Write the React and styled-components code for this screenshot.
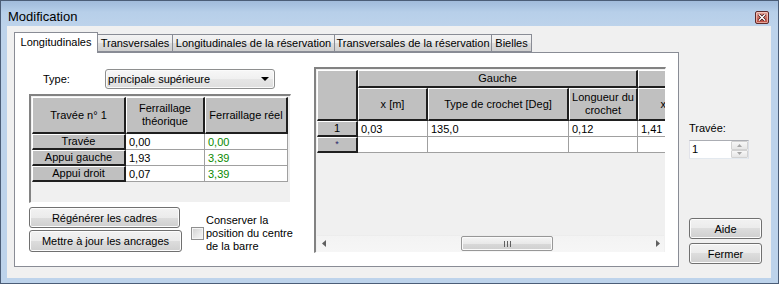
import React from "react"
import styled, { createGlobalStyle } from "styled-components"

const GlobalStyle = createGlobalStyle`
    html, body {
        margin: 0;
        padding: 0;
        background: #ffffff;
    }
    body {
        font-family: "Liberation Sans", Arial, sans-serif;
        font-size: 11px;
        color: #000;
    }
    * {
        box-sizing: border-box;
    }
`

const Window = styled.div`
    width: 779px;
    height: 284px;
    border: 1px solid #4b5d77;
    background: linear-gradient(to bottom, #a1bbdb 0px, #a9c3e1 5px, #b7cfe9 11px, #bdd3eb 26px, #bdd3eb 100%);
    display: flex;
    flex-direction: column;
    padding: 0 7px 5px 6px;
`

const TitleBar = styled.div`
    height: 25px;
    display: flex;
    align-items: flex-start;
    padding-top: 8px;
    padding-left: 1px;
`

const Title = styled.span`
    font-size: 13px;
    line-height: 15px;
`

const CloseButton = styled.div`
    margin-left: auto;
    margin-right: 2px;
    margin-top: 2px;
    width: 14px;
    height: 13px;
    border: 1px solid #5e2a2a;
    border-radius: 2px;
    background: linear-gradient(to bottom, #e3a79e 0%, #cf6f63 50%, #b9483c 100%);
    box-shadow: inset 0 0 0 1px rgba(255, 220, 210, 0.6);
    display: flex;
    align-items: center;
    justify-content: center;
`

const Client = styled.div`
    flex: 1;
    background: #f0f0f0;
    display: flex;
    padding: 6px 9px 11px 7px;
`

const TabControl = styled.div`
    width: 665px;
    display: flex;
    flex-direction: column;
`

const TabStrip = styled.div`
    height: 20px;
    display: flex;
    align-items: flex-end;
`

const Tab = styled.div`
    width: ${p => p.$width}px;
    height: ${p => (p.$active ? 21 : 18)}px;
    margin-bottom: ${p => (p.$active ? -1 : 0)}px;
    margin-left: ${p => (p.$first ? 0 : -1)}px;
    position: relative;
    z-index: ${p => (p.$active ? 2 : 1)};
    border: 1px solid #898c95;
    border-bottom: ${p => (p.$active ? "none" : "1px solid #898c95")};
    background: ${p => (p.$active
        ? "#ffffff"
        : "linear-gradient(to bottom, #f3f3f3 0%, #ebebeb 50%, #dddddd 50%, #cfcfcf 100%)")};
    display: flex;
    align-items: center;
    justify-content: center;
    white-space: nowrap;
    padding-bottom: ${p => (p.$active ? 2 : 0)}px;
`

const Panel = styled.div`
    flex: 1;
    border: 1px solid #898c95;
    background: #ffffff;
    display: flex;
    align-items: flex-start;
`

const LeftColumn = styled.div`
    margin-left: 14px;
    margin-top: 16px;
    width: 262px;
    display: flex;
    flex-direction: column;
`

const TypeRow = styled.div`
    height: 20px;
    display: flex;
    align-items: center;
`

const TypeLabel = styled.span`
    width: 76px;
    padding-left: 14px;
`

const Dropdown = styled.div`
    width: 170px;
    height: 20px;
    border: 1px solid #8e8f8f;
    border-radius: 3px;
    background: linear-gradient(to bottom, #f7f7f7 0%, #f0f0f0 50%, #e6e6e6 50%, #dedede 100%);
    box-shadow: inset 0 0 0 1px #fbfbfb;
    display: flex;
    align-items: center;
    padding: 0 5px 0 2px;
    justify-content: space-between;
`

const GridFrame = styled.div`
    width: ${p => p.$width}px;
    height: ${p => p.$height}px;
    margin-top: ${p => p.$top || 0}px;
    margin-left: ${p => p.$left || 0}px;
    border-style: solid;
    border-width: 2px 1px 1px 2px;
    border-color: #828282 #ffffff #ffffff #828282;
    padding: 1px 0 0 1px;
    background: #f0f0f0;
    overflow: hidden;
    display: flex;
    flex-direction: column;
`

const Grid = styled.div`
    display: grid;
    grid-template-columns: ${p => p.$cols};
    grid-template-rows: ${p => p.$rows};
    width: max-content;
`

const HeadCell = styled.div`
    background: #c0c0c0;
    border-style: solid;
    border-width: 1px 2px 2px 1px;
    border-color: #ffffff #1f1f1f #1f1f1f #ffffff;
    display: flex;
    align-items: center;
    justify-content: center;
    text-align: center;
    line-height: 13px;
    white-space: nowrap;
    overflow: hidden;
    grid-column: ${p => (p.$span ? `span ${p.$span}` : "auto")};
    grid-row: ${p => (p.$rowSpan ? `span ${p.$rowSpan}` : "auto")};
    font-size: ${p => (p.$small ? 9 : 11)}px;
    color: ${p => (p.$small ? "#2a2a6a" : "#000")};
`

const DataCell = styled.div`
    background: #ffffff;
    border-right: 1px solid #a0a0a0;
    border-bottom: 1px solid #a0a0a0;
    padding-left: 3px;
    display: flex;
    align-items: center;
    white-space: nowrap;
    color: ${p => (p.$green ? "#0a8a00" : "#000")};
`

const ActionsRow = styled.div`
    margin-top: 4px;
    display: flex;
    align-items: flex-start;
`

const ButtonStack = styled.div`
    width: 153px;
    display: flex;
    flex-direction: column;
    gap: 2px;
`

const Button = styled.button`
    width: ${p => p.$width || 153}px;
    height: ${p => p.$height || 21}px;
    padding: 0;
    font-family: inherit;
    font-size: 11px;
    color: #000;
    border: 1px solid #707070;
    border-radius: 3px;
    background: linear-gradient(to bottom, #f2f2f2 0%, #ebebeb 50%, #dddddd 50%, #cfcfcf 100%);
    box-shadow: inset 0 0 0 1px #fcfcfc;
`

const CheckRow = styled.label`
    margin-left: 9px;
    margin-top: 7px;
    display: flex;
    align-items: center;
    gap: 2px;
`

const CheckBox = styled.span`
    width: 13px;
    height: 13px;
    flex: none;
    border: 1px solid #8f8f8f;
    background: linear-gradient(135deg, #cfcfcf 0%, #e9e9e9 60%, #f6f6f6 100%);
    box-shadow: inset 0 0 0 1px #f4f4f4;
`

const CheckText = styled.span`
    line-height: 13px;
    white-space: nowrap;
`

const ScrollBar = styled.div`
    margin-top: auto;
    width: 347px;
    height: 17px;
    flex: none;
    display: flex;
    align-items: center;
    background: linear-gradient(to bottom, #e6e6e6 0px, #f3f3f3 1px, #f6f6f6 100%);
`

const ScrollArrow = styled.div`
    width: 13px;
    height: 17px;
    flex: none;
    display: flex;
    align-items: center;
    justify-content: center;
`

const ScrollTrack = styled.div`
    flex: 1;
    height: 17px;
    display: flex;
    align-items: center;
`

const ScrollThumb = styled.div`
    margin-left: ${p => p.$offset}px;
    width: ${p => p.$size}px;
    height: 15px;
    border: 1px solid #979797;
    border-radius: 2px;
    background: linear-gradient(to bottom, #f5f5f5 0%, #e9e9e9 50%, #d9d9d9 50%, #cfcfcf 100%);
    box-shadow: inset 0 0 0 1px #fafafa;
    display: flex;
    align-items: center;
    justify-content: center;
`

const SideColumn = styled.div`
    margin-left: 10px;
    width: 73px;
    display: flex;
    flex-direction: column;
    padding-top: 90px;
    padding-bottom: 3px;
`

const SideLabel = styled.span`
    line-height: 13px;
`

const SpinBox = styled.div`
    margin-top: 5px;
    width: 60px;
    height: 19px;
    border: 1px solid;
    border-color: #abadb3 #dbdfe6 #e3e9ef #e2e3ea;
    background: #ffffff;
    display: flex;
`

const SpinValue = styled.span`
    flex: 1;
    padding-left: 2px;
    line-height: 17px;
`

const SpinButtons = styled.div`
    width: 17px;
    display: flex;
    flex-direction: column;
`

const SpinButton = styled.div`
    flex: 1;
    border: 1px solid #d2d2d2;
    border-radius: 1px;
    background: linear-gradient(to bottom, #f7f7f7, #e6e6e6);
    display: flex;
    align-items: center;
    justify-content: center;
`

const SideButtons = styled.div`
    margin-top: auto;
    display: flex;
    flex-direction: column;
    align-items: flex-end;
    gap: 4px;
`

const TriangleDown = () => (
    <svg width="8" height="4" viewBox="0 0 8 4">
        <polygon points="0,0 8,0 4,4" fill="#000" />
    </svg>
)

const Arrow = ({ dir }) => (
    <svg width="4" height="7" viewBox="0 0 4 7">
        {dir === "left"
            ? <polygon points="4,0 0,3.5 4,7" fill="#606060" />
            : <polygon points="0,0 4,3.5 0,7" fill="#606060" />}
    </svg>
)

const SpinArrow = ({ up }) => (
    <svg width="5" height="3" viewBox="0 0 5 3">
        {up
            ? <polygon points="0,3 5,3 2.5,0" fill="#a6a6a6" />
            : <polygon points="0,0 5,0 2.5,3" fill="#a6a6a6" />}
    </svg>
)

const Grip = () => (
    <svg width="7" height="6" viewBox="0 0 7 6">
        <rect x="0" y="0" width="1" height="6" fill="#606060" />
        <rect x="3" y="0" width="1" height="6" fill="#606060" />
        <rect x="6" y="0" width="1" height="6" fill="#606060" />
    </svg>
)

const tabs = [
    { label: "Longitudinales", width: 84 },
    { label: "Transversales", width: 76 },
    { label: "Longitudinales de la réservation", width: 163 },
    { label: "Transversales de la réservation", width: 158 },
    { label: "Bielles", width: 41 },
]

const spanRows = [
    { name: "Travée", theo: "0,00", real: "0,00" },
    { name: "Appui gauche", theo: "1,93", real: "3,39" },
    { name: "Appui droit", theo: "0,07", real: "3,39" },
]

const SpanGrid = () => (
    <GridFrame $width={262} $height={109} $top={5}>
        <Grid $cols="94px 79px 83px" $rows="37px 16px 16px 16px">
            <HeadCell>Travée n° 1</HeadCell>
            <HeadCell>Ferraillage<br />théorique</HeadCell>
            <HeadCell>Ferraillage réel</HeadCell>
            {spanRows.map(row => (
                <React.Fragment key={row.name}>
                    <HeadCell>{row.name}</HeadCell>
                    <DataCell>{row.theo}</DataCell>
                    <DataCell $green>{row.real}</DataCell>
                </React.Fragment>
            ))}
        </Grid>
    </GridFrame>
)

const HookGrid = () => (
    <GridFrame $width={352} $height={186} $top={14} $left={23}>
        <Grid $cols="41px 70px 141px 69px 70px" $rows="18px 33px 16px 16px">
            <HeadCell $rowSpan={2}></HeadCell>
            <HeadCell $span={3}>Gauche</HeadCell>
            <HeadCell></HeadCell>
            <HeadCell>x [m]</HeadCell>
            <HeadCell>Type de crochet [Deg]</HeadCell>
            <HeadCell>Longueur du<br />crochet</HeadCell>
            <HeadCell>x [m]</HeadCell>

            <HeadCell>1</HeadCell>
            <DataCell>0,03</DataCell>
            <DataCell>135,0</DataCell>
            <DataCell>0,12</DataCell>
            <DataCell>1,41</DataCell>

            <HeadCell $small>*</HeadCell>
            <DataCell />
            <DataCell />
            <DataCell />
            <DataCell />
        </Grid>
        <ScrollBar>
            <ScrollArrow><Arrow dir="left" /></ScrollArrow>
            <ScrollTrack>
                <ScrollThumb $offset={131} $size={92}><Grip /></ScrollThumb>
            </ScrollTrack>
            <ScrollArrow><Arrow dir="right" /></ScrollArrow>
        </ScrollBar>
    </GridFrame>
)

export default function App() {
    return (
        <>
            <GlobalStyle />
            <Window>
                <TitleBar>
                    <Title>Modification</Title>
                    <CloseButton>
                        <svg width="8" height="7" viewBox="0 0 8 7">
                            <path d="M1 0.5 L7 6.5 M7 0.5 L1 6.5" stroke="#3a1010" strokeWidth="3" />
                            <path d="M1 0.5 L7 6.5 M7 0.5 L1 6.5" stroke="#ffffff" strokeWidth="1.5" />
                        </svg>
                    </CloseButton>
                </TitleBar>
                <Client>
                    <TabControl>
                        <TabStrip>
                            {tabs.map((tab, i) => (
                                <Tab key={tab.label} $width={tab.width} $active={i === 0} $first={i === 0}>
                                    {tab.label}
                                </Tab>
                            ))}
                        </TabStrip>
                        <Panel>
                            <LeftColumn>
                                <TypeRow>
                                    <TypeLabel>Type:</TypeLabel>
                                    <Dropdown>
                                        <span>principale supérieure</span>
                                        <TriangleDown />
                                    </Dropdown>
                                </TypeRow>
                                <SpanGrid />
                                <ActionsRow>
                                    <ButtonStack>
                                        <Button $width={151}>Régénérer les cadres</Button>
                                        <Button $height={22}>Mettre à jour les ancrages</Button>
                                    </ButtonStack>
                                    <CheckRow>
                                        <CheckBox />
                                        <CheckText>Conserver la<br />position du centre<br />de la barre</CheckText>
                                    </CheckRow>
                                </ActionsRow>
                            </LeftColumn>
                            <HookGrid />
                        </Panel>
                    </TabControl>
                    <SideColumn>
                        <SideLabel>Travée:</SideLabel>
                        <SpinBox>
                            <SpinValue>1</SpinValue>
                            <SpinButtons>
                                <SpinButton><SpinArrow up /></SpinButton>
                                <SpinButton><SpinArrow /></SpinButton>
                            </SpinButtons>
                        </SpinBox>
                        <SideButtons>
                            <Button $width={73}>Aide</Button>
                            <Button $width={73}>Fermer</Button>
                        </SideButtons>
                    </SideColumn>
                </Client>
            </Window>
        </>
    )
}
